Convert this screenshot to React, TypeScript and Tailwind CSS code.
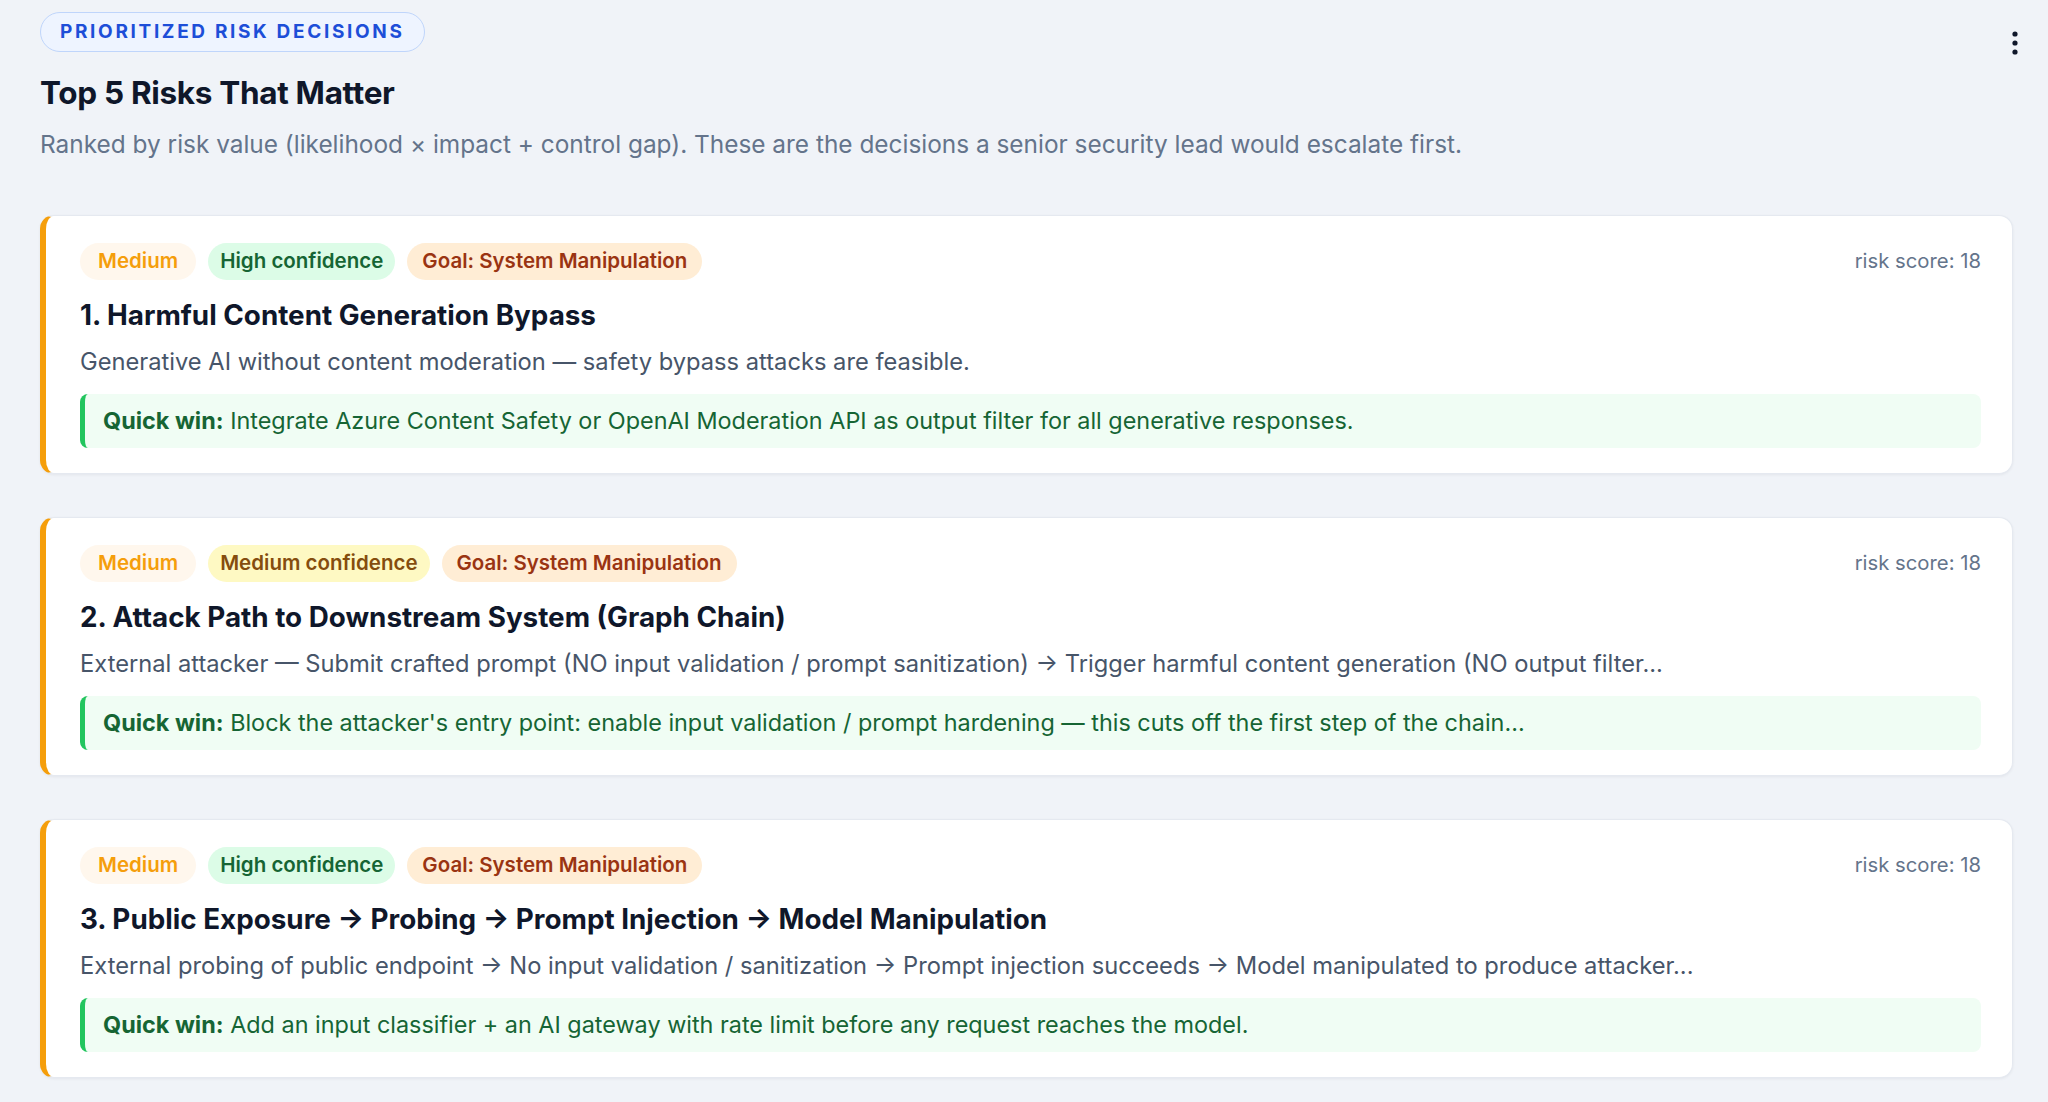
import React from "react";

type Risk = {
  conf: "High" | "Medium";
  title: string;
  desc: string;
  win: string;
};

const risks: Risk[] = [
  {
    conf: "High",
    title: "1. Harmful Content Generation Bypass",
    desc: "Generative AI without content moderation — safety bypass attacks are feasible.",
    win: "Integrate Azure Content Safety or OpenAI Moderation API as output filter for all generative responses.",
  },
  {
    conf: "Medium",
    title: "2. Attack Path to Downstream System (Graph Chain)",
    desc: "External attacker — Submit crafted prompt (NO input validation / prompt sanitization) → Trigger harmful content generation (NO output filter...",
    win: "Block the attacker's entry point: enable input validation / prompt hardening — this cuts off the first step of the chain...",
  },
  {
    conf: "High",
    title: "3. Public Exposure → Probing → Prompt Injection → Model Manipulation",
    desc: "External probing of public endpoint → No input validation / sanitization → Prompt injection succeeds → Model manipulated to produce attacker...",
    win: "Add an input classifier + an AI gateway with rate limit before any request reaches the model.",
  },
];

function Card({ r }: { r: Risk }) {
  return (
    <div className="bg-white rounded-[14px] border border-[#e5e9f0] border-l-[6px] border-l-[#f59e0b] shadow-[0_1px_3px_rgba(15,23,42,0.06)] pl-[34px] pr-[31px] pt-[27px] pb-[25px]">
      <div className="flex items-center justify-between">
        <div className="flex items-center gap-[12px]">
          <span className="h-[37px] px-[18px] rounded-full bg-[#fff7ed] text-[#f59e0b] text-[20.5px] font-semibold flex items-center">
            Medium
          </span>
          {r.conf === "High" ? (
            <span className="h-[37px] px-[12px] rounded-full bg-[#dcfce7] text-[#166534] text-[20.5px] font-semibold flex items-center">
              High confidence
            </span>
          ) : (
            <span className="h-[37px] px-[12px] rounded-full bg-[#fef9c3] text-[#854d0e] text-[20.5px] font-semibold flex items-center">
              Medium confidence
            </span>
          )}
          <span className="h-[37px] px-[15px] rounded-full bg-[#ffedd5] text-[#9a3412] text-[20.5px] font-semibold flex items-center">
            Goal: System Manipulation
          </span>
        </div>
        <span className="text-[20.3px] text-[#64748b]">risk score: 18</span>
      </div>
      <div className="mt-[18px] text-[27.8px] leading-[34px] font-bold text-[#0f172a]">{r.title}</div>
      <div className="mt-[15px] text-[23.7px] leading-[30px] text-[#475569]">{r.desc}</div>
      <div className="mt-[17px] h-[54px] rounded-[8px] bg-[#f0fdf4] border-l-[5px] border-l-[#22c55e] pl-[18px] flex items-center text-[23.4px] text-[#166534]">
        <span>
          <span className="font-bold">Quick win:</span> {r.win}
        </span>
      </div>
    </div>
  );
}

export default function App() {
  return (
    <div
      className="min-h-screen bg-[#f0f3f8] pl-[40px] pr-[35px] pt-[12px] pb-[24px]"
      style={{ fontFamily: "Inter, 'Noto Sans', sans-serif" }}
    >
      <div className="flex items-start justify-between">
        <div>
          <span className="inline-flex items-center h-[40px] px-[19px] rounded-full bg-[#eef4ff] border border-[#bfd5fb] text-[#1d4ed8] text-[19px] font-bold tracking-[0.14em]">
            PRIORITIZED RISK DECISIONS
          </span>
          <h1 className="mt-[22px] text-[31.5px] leading-[38px] font-bold text-[#0f172a] tracking-[-0.01em]">
            Top 5 Risks That Matter
          </h1>
          <p className="mt-[16px] text-[24.4px] leading-[32px] text-[#64748b]">
            Ranked by risk value (likelihood × impact + control gap). These are the decisions a senior security lead would escalate first.
          </p>
        </div>
        <button className="mt-[14px] mr-[-16px] w-[28px] h-[34px] flex items-center justify-center">
          <svg width="8" height="26" viewBox="0 0 8 26">
            <circle cx="4" cy="4" r="2.6" fill="#0f172a" />
            <circle cx="4" cy="13" r="2.6" fill="#0f172a" />
            <circle cx="4" cy="22" r="2.6" fill="#0f172a" />
          </svg>
        </button>
      </div>
      <div className="mt-[55px] flex flex-col gap-[43px]">
        {risks.map((r, i) => (
          <Card key={i} r={r} />
        ))}
      </div>
    </div>
  );
}
